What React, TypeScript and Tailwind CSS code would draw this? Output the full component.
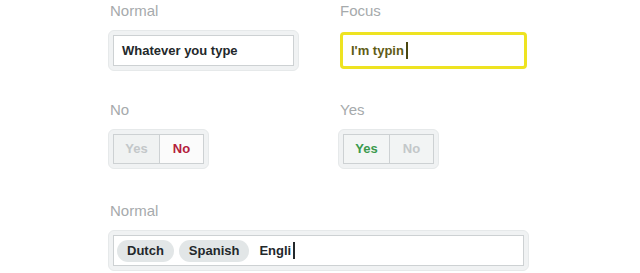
import React from "react";

const font = { fontFamily: '"Liberation Sans", Arial, Helvetica, sans-serif' };

function Label({ children }: { children: React.ReactNode }) {
  return <div className="pl-[2px] text-[15px] leading-[22px] text-[#a6aaac]">{children}</div>;
}

function Halo({ children, className = "" }: { children: React.ReactNode; className?: string }) {
  return (
    <div className={`rounded-[6px] border border-[#e6e9ea] bg-[#f0f2f3] p-[4px] ${className}`}>{children}</div>
  );
}

function Cursor({ color }: { color: string }) {
  return <span className={`ml-[2px] inline-block h-[17px] w-[2px] align-middle ${color}`} />;
}

export default function App() {
  return (
    <div style={font} className="h-[273px] w-[640px] bg-white pl-[108px]">
      <div className="flex">
        <div className="w-[230px]">
          <Label>Normal</Label>
          <Halo className="mt-[8px] w-[191px]">
            <div className="flex h-[31px] items-center border border-[#cdd1d3] bg-white pl-[8px] text-[13px] font-bold text-[#23282b]">
              Whatever you type
            </div>
          </Halo>
        </div>
        <div className="w-[191px]">
          <Label>Focus</Label>
          <div className="mt-[8px] w-[191px] p-[2px]">
            <div className="rounded-[4px] border-[3px] border-[#eee321] bg-white">
              <div className="flex h-[31px] items-center pl-[8px] text-[13px] font-bold text-[#5f5c16]">
                I'm typin
                <Cursor color="bg-[#4a4710]" />
              </div>
            </div>
          </div>
        </div>
      </div>

      <div className="mt-[28px] flex">
        <div className="w-[230px]">
          <Label>No</Label>
          <Halo className="mt-[8px] w-[101px]">
            <div className="flex h-[30px] border border-[#cdd1d3] text-[13px] font-bold">
              <div className="flex w-[45px] items-center justify-center bg-[#f0f2f2] text-[#c3c7c9]">Yes</div>
              <div className="flex flex-1 items-center justify-center border-l border-[#cdd1d3] bg-[#fbfbfb] text-[#b3203c]">
                No
              </div>
            </div>
          </Halo>
        </div>
        <div className="w-[191px]">
          <Label>Yes</Label>
          <Halo className="mt-[8px] w-[101px]">
            <div className="flex h-[30px] border border-[#cdd1d3] text-[13px] font-bold">
              <div className="flex w-[45px] items-center justify-center bg-[#f3f5f5] text-[#3a9a4c]">Yes</div>
              <div className="flex flex-1 items-center justify-center border-l border-[#cdd1d3] bg-[#f2f4f4] text-[#c3c7c9]">
                No
              </div>
            </div>
          </Halo>
        </div>
      </div>

      <div className="mt-[31px] w-[421px]">
        <Label>Normal</Label>
        <Halo className="mt-[8px] w-[421px]">
          <div className="flex h-[31px] items-center gap-[5px] border border-[#cdd1d3] bg-white pl-[3px] text-[13px] font-bold text-[#23282b]">
            <span className="flex h-[22px] items-center rounded-full bg-[#e2e6e7] px-[10px]">Dutch</span>
            <span className="flex h-[22px] items-center rounded-full bg-[#e2e6e7] px-[10px]">Spanish</span>
            <span className="ml-[5px] flex items-center">
              Engli
              <Cursor color="bg-[#23282b]" />
            </span>
          </div>
        </Halo>
      </div>
    </div>
  );
}
